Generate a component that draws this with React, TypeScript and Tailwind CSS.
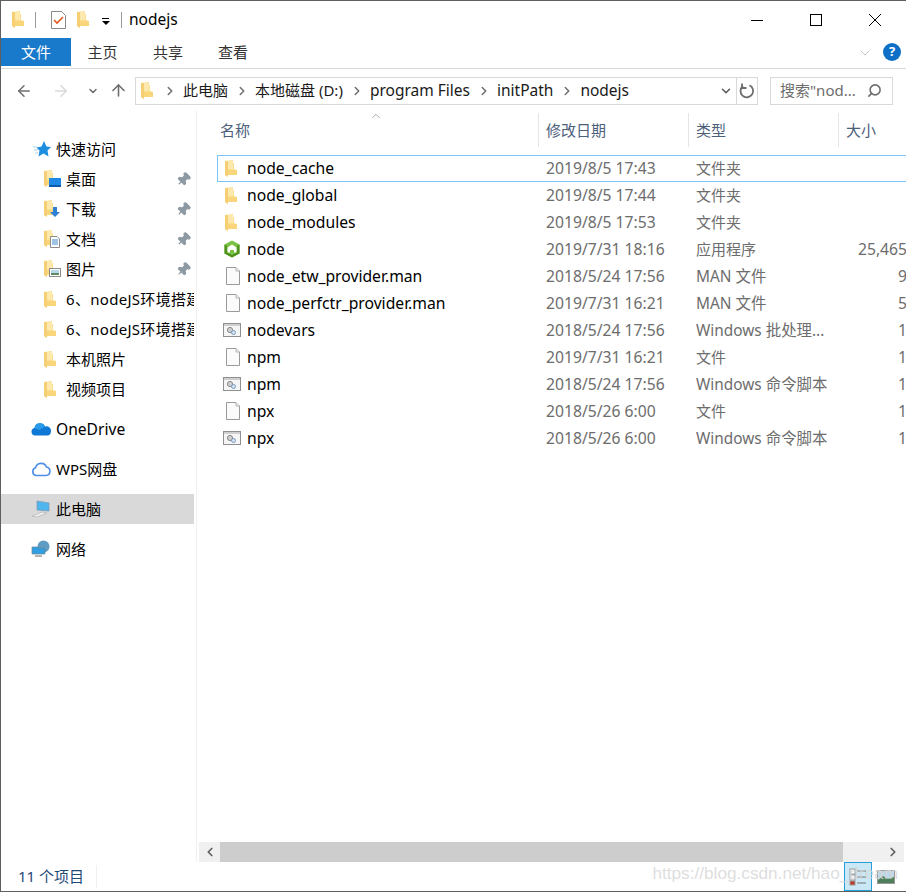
import React from "react";
import { ChevronDown, ChevronUp, ChevronRight, ChevronLeft, ArrowLeft, ArrowRight, ArrowUp, Search, Pin } from "lucide-react";

const FONT = "font-['Noto_Sans','Noto_Sans_CJK_SC',sans-serif]";

function Folder({ className = "" }: { className?: string }) {
  return (
    <svg viewBox="0 0 12 17" className={`w-[12px] h-[17px] shrink-0 ${className}`}>
      <path d="M0 1 L8 0 V3 H9 V9 L12 10 V15 H3 V17 L0 15 Z" fill="#fbdf8e" />
      <path d="M0 1 L3 1 V17 L0 15 Z" fill="#f6cf74" />
      <path d="M3 1 H8 V9 H3 Z" fill="#fde9ad" />
      <path d="M3 10 H12 V15 H3 Z" fill="#f9d67c" />
    </svg>
  );
}

function QuickFolder({ kind }: { kind: string }) {
  return (
    <div className="relative w-[17px] h-[18px] shrink-0">
      <Folder />
      <svg viewBox="0 0 12 12" className="absolute right-0 bottom-0 w-[12px] h-[12px]">
        {kind === "desk" && (
          <>
            <rect x="0" y="2" width="12" height="9" fill="#1e88e5" />
            <rect x="0" y="9" width="12" height="2" fill="#0d5aa7" />
          </>
        )}
        {kind === "down" && <path d="M4 1 H8 V6 H11 L6 11 L1 6 H4 Z" fill="#2f7fd4" />}
        {kind === "doc" && (
          <>
            <path d="M1.5 0.5 H8 L10.5 3 V11.5 H1.5 Z" fill="#fff" stroke="#8c8c8c" />
            <path d="M3 4 H9 M3 6 H9 M3 8 H9" stroke="#3c8ac9" />
          </>
        )}
        {kind === "pic" && (
          <>
            <rect x="0.5" y="2.5" width="11" height="8" fill="#fff" stroke="#8c8c8c" />
            <rect x="2" y="4" width="8" height="3" fill="#b7d7ea" />
            <rect x="2" y="7" width="8" height="2" fill="#5f8a5f" />
          </>
        )}
      </svg>
    </div>
  );
}

function FileIcon() {
  return (
    <svg viewBox="0 0 16 18" className="w-[16px] h-[18px] shrink-0">
      <path d="M1.5 0.5 H11 L14.5 4 V17.5 H1.5 Z" fill="#fbfbfb" stroke="#9a9a9a" />
      <path d="M11 0.5 V4 H14.5" fill="#eee" stroke="#b5b5b5" />
    </svg>
  );
}

function BatIcon() {
  return (
    <svg viewBox="0 0 18 14" className="w-[18px] h-[14px] shrink-0 -ml-[2px]">
      <rect x="0.5" y="0.5" width="17" height="13" fill="#f5f5f5" stroke="#8f8f8f" />
      <rect x="1" y="1" width="16" height="2" fill="#cfcfcf" />
      <circle cx="7" cy="7" r="2.6" fill="#d0d0d0" stroke="#8a8a8a" />
      <circle cx="10.5" cy="9.5" r="2" fill="#d4e3f2" stroke="#7b9bc0" />
    </svg>
  );
}

function NodeIcon() {
  return (
    <svg viewBox="0 0 16 18" className="w-[16px] h-[18px] shrink-0 -ml-[1px]">
      <path d="M8 0.5 L15.5 4.5 V13.5 L8 17.5 L0.5 13.5 V4.5 Z" fill="#7cc242" />
      <path d="M8 17.5 L15.5 13.5 V4.5 L13 6 V12 L8 15 L3 12 V6 L0.5 4.5 V13.5 Z" fill="#4e9320" />
      <path d="M8 4.5 L12.5 7.5 V12.5 H10 V10 H6 V12.5 H3.5 V7.5 Z" fill="#fff" />
    </svg>
  );
}

function CheckDoc() {
  return (
    <svg viewBox="0 0 15 18" className="w-[15px] h-[18px]">
      <path d="M0.5 0.5 H10.5 L14.5 4.5 V17.5 H0.5 Z" fill="#fff" stroke="#8a8a8a" />
      <path d="M3 9 L6 12 L12 6" fill="none" stroke="#e2571e" strokeWidth="1.6" />
    </svg>
  );
}

function NavRow({ icon, label, pin, active, indent, star, labelClass }: { icon: React.ReactNode; label: string; pin?: boolean; active?: boolean; indent?: boolean; star?: boolean; labelClass?: string }) {
  const pad = indent ? "pl-[43px]" : star ? "pl-[32px]" : "pl-[30px]";
  const iconBox = indent ? "w-[22px]" : star ? "w-[23px]" : "w-[25px]";
  return (
    <div className={`h-[30px] flex items-center text-[15px] text-black whitespace-nowrap overflow-hidden ${pad} ${active ? "bg-[#d9d9d9]" : ""}`}>
      <div className={`${iconBox} shrink-0 flex items-center`}>{icon}</div>
      <span className={`flex-1 overflow-hidden ${labelClass ?? ""}`}>{label}</span>
      {pin && <Pin className="w-[15px] h-[15px] mr-[3px] rotate-45 text-[#8d99a3] fill-[#8d99a3] shrink-0" />}
    </div>
  );
}

const rows = [
  { icon: <Folder />, name: "node_cache", date: "2019/8/5 17:43", type: "文件夹", size: "" },
  { icon: <Folder />, name: "node_global", date: "2019/8/5 17:44", type: "文件夹", size: "" },
  { icon: <Folder />, name: "node_modules", date: "2019/8/5 17:53", type: "文件夹", size: "" },
  { icon: <NodeIcon />, name: "node", date: "2019/7/31 18:16", type: "应用程序", size: "25,465 KB" },
  { icon: <FileIcon />, name: "node_etw_provider.man", date: "2018/5/24 17:56", type: "MAN 文件", size: "9 KB" },
  { icon: <FileIcon />, name: "node_perfctr_provider.man", date: "2019/7/31 16:21", type: "MAN 文件", size: "5 KB" },
  { icon: <BatIcon />, name: "nodevars", date: "2018/5/24 17:56", type: "Windows 批处理...", size: "1 KB" },
  { icon: <FileIcon />, name: "npm", date: "2019/7/31 16:21", type: "文件", size: "1 KB" },
  { icon: <BatIcon />, name: "npm", date: "2018/5/24 17:56", type: "Windows 命令脚本", size: "1 KB" },
  { icon: <FileIcon />, name: "npx", date: "2018/5/26 6:00", type: "文件", size: "1 KB" },
  { icon: <BatIcon />, name: "npx", date: "2018/5/26 6:00", type: "Windows 命令脚本", size: "1 KB" },
];

function Crumb({ text, latin }: { text: string; latin?: boolean }) {
  return (
    <>
      <ChevronRight className="w-[14px] h-[14px] text-[#6d6d6d] mx-[6px] shrink-0" strokeWidth={2.5} />
      <span className={`mr-[1px] ${latin ? "text-[15.5px]" : ""}`}>{text}</span>
    </>
  );
}

export default function App() {
  return (
    <div className={`relative w-[906px] h-[892px] bg-white flex flex-col overflow-hidden border-y border-l border-[#5f5f5f] ${FONT}`}>
      {/* title bar */}
      <div className="h-[37px] flex items-center shrink-0">
        <div className="pl-[11px] flex items-center">
          <Folder />
          <div className="w-px h-[16px] bg-[#9a9a9a] ml-[11px] mr-[15px]" />
          <CheckDoc />
          <Folder className="ml-[11px]" />
          <span className="ml-[13px] mt-[4px] w-[7px] flex flex-col items-center gap-[2px]">
            <span className="w-[7px] h-px bg-black" />
            <span className="w-0 h-0 border-x-[4px] border-x-transparent border-t-[4px] border-t-black" />
          </span>
          <div className="w-px h-[16px] bg-[#9a9a9a] ml-[12px] mr-[7px]" />
          <span className="text-[15.5px]">nodejs</span>
        </div>
        <div className="ml-auto flex items-center">
          <svg viewBox="0 0 12 12" className="w-[12px] h-[12px] mr-[47px]"><path d="M0 6.5 H12" stroke="#000" /></svg>
          <svg viewBox="0 0 12 12" className="w-[12px] h-[12px] mr-[47px]"><rect x="0.5" y="0.5" width="11" height="11" fill="none" stroke="#000" /></svg>
          <svg viewBox="0 0 12 12" className="w-[12px] h-[12px] mr-[25px]"><path d="M0 0 L12 12 M12 0 L0 12" stroke="#000" /></svg>
        </div>
      </div>

      {/* ribbon tabs */}
      <div className="h-[31px] flex items-start shrink-0 border-b border-[#d9d9d9] text-[15px] text-[#333]">
        <div className="w-[70px] h-[28px] bg-[#1979ca] text-white flex items-center justify-center">文件</div>
        <div className="w-[63px] h-[28px] flex items-center justify-center">主页</div>
        <div className="w-[68px] h-[28px] flex items-center justify-center">共享</div>
        <div className="w-[62px] h-[28px] flex items-center justify-center">查看</div>
        <div className="ml-auto flex items-center h-[28px] pr-[5px] gap-[10px]">
          <ChevronDown className="w-[16px] h-[16px] mt-[2px] text-[#b5b5b5]" strokeWidth={1.25} />
          <div className="w-[18px] h-[18px] rounded-full bg-[#0f6fc6] text-white text-[13px] font-bold flex items-center justify-center">?</div>
        </div>
      </div>

      {/* address row */}
      <div className="h-[42px] flex items-center shrink-0 pt-[1px]">
        <ArrowLeft className="w-[18px] h-[18px] ml-[14px] text-[#6d6d6d]" />
        <ArrowRight className="w-[18px] h-[18px] ml-[19px] text-[#d9d9d9]" />
        <ChevronDown className="w-[12px] h-[12px] ml-[17px] text-[#6d6d6d]" strokeWidth={3} />
        <ArrowUp className="w-[19px] h-[19px] ml-[10px] text-[#6d6d6d]" />
        <div className="ml-[7px] w-[623px] h-[28px] border border-[#d9d9d9] flex items-center text-[15px] text-[#1a1a1a]">
          <div className="flex-1 flex items-center pl-[5px] whitespace-nowrap">
            <Folder />
            <span className="w-[4px]" />
            <Crumb text="此电脑" />
            <Crumb text="本地磁盘 (D:)" />
            <Crumb text="program Files" latin />
            <Crumb text="initPath" latin />
            <Crumb text="nodejs" latin />
          </div>
          <ChevronDown className="w-[14px] h-[14px] text-[#555] mr-[3px]" strokeWidth={2.5} />
          <div className="w-[21px] h-full border-l border-[#d9d9d9] flex items-center justify-center">
            <svg viewBox="0 0 16 16" className="w-[16px] h-[16px]">
              <path d="M4 3 A6.3 6.3 0 1 0 10.5 2.3" fill="none" stroke="#6d6d6d" strokeWidth="1.8" />
              <path d="M3 0.5 V5 H7.5" fill="none" stroke="#6d6d6d" strokeWidth="1.8" />
            </svg>
          </div>
        </div>
        <div className="ml-[12px] w-[123px] h-[28px] border border-[#d9d9d9] flex items-center pl-[9px] text-[15px] text-[#6d6d6d]">
          <span className="flex-1 whitespace-nowrap">搜索"nod...</span>
          <Search className="w-[15px] h-[15px] mr-[10px] -scale-x-100 text-[#6d6d6d]" strokeWidth={2.5} />
        </div>
      </div>

      {/* body */}
      <div className="flex-1 flex min-h-0">
        {/* nav pane */}
        <div className="w-[193px] shrink-0 pt-[23px]">
          <NavRow star icon={<svg viewBox="0 0 18 16" className="w-[18px] h-[16px]"><path d="M11 0 L13.5 5.5 L18 6 L14.5 9.5 L15.5 15.5 L10.5 12.5 L5.5 15.5 L6.5 9.5 L3.5 6.5 L8.5 5.5 Z" fill="#1e8fe0" /><path d="M0 6 H4 M1 9 H5 M2 12 H5" stroke="#a8d4f2" /></svg>} label="快速访问" />
          <NavRow indent icon={<QuickFolder kind="desk" />} label="桌面" pin />
          <NavRow indent icon={<QuickFolder kind="down" />} label="下载" pin />
          <NavRow indent icon={<QuickFolder kind="doc" />} label="文档" pin />
          <NavRow indent icon={<QuickFolder kind="pic" />} label="图片" pin />
          <NavRow indent labelClass="tracking-[0.3px]" icon={<Folder />} label="6、nodeJS环境搭建" />
          <NavRow indent labelClass="tracking-[0.3px]" icon={<Folder />} label="6、nodeJS环境搭建" />
          <NavRow indent icon={<Folder />} label="本机照片" />
          <NavRow indent icon={<Folder />} label="视频项目" />
          <div className="h-[10px]" />
          <NavRow labelClass="text-[15.6px] mt-[1px]" icon={<svg viewBox="0 0 20 14" className="w-[20px] h-[14px]"><path d="M4 13.5 A3.8 3.8 0 0 1 3.5 6 A5.5 5.5 0 0 1 14 4.5 A4.5 4.5 0 0 1 19.8 10 A3.5 3.5 0 0 1 17 13.5 Z" fill="#0f78d4" /><path d="M3.5 6 A5.5 5.5 0 0 1 14 4.5 L8 8 Z" fill="#2a9be8" /></svg>} label="OneDrive" />
          <div className="h-[10px]" />
          <NavRow icon={<svg viewBox="0 0 20 16" className="w-[20px] h-[16px]"><path d="M5 14.5 A4 4 0 0 1 4.5 6.8 A5.8 5.8 0 0 1 15.5 6 A4.3 4.3 0 0 1 15 14.5 Z" fill="none" stroke="#4d8fe8" strokeWidth="1.6" /></svg>} label="WPS网盘" />
          <div className="h-[10px]" />
          <NavRow active icon={<svg viewBox="0 0 20 18" className="w-[20px] h-[18px]"><path d="M6 1 L18 3 V11 L6 10 Z" fill="#4fb5ee" stroke="#7d9db5" strokeWidth="0.8" /><path d="M1 16 L11 12 L16 13 L6 17 Z" fill="#eee" stroke="#b4b4b4" strokeWidth="0.7" /></svg>} label="此电脑" />
          <div className="h-[10px]" />
          <NavRow icon={<svg viewBox="0 0 20 18" className="w-[20px] h-[18px]"><circle cx="12.5" cy="6.5" r="6" fill="#5f9cc4" /><path d="M8 8 H14 V14 H1 V7 H8 Z" fill="#2f9fe2" stroke="#6f8796" strokeWidth="0.7" /><path d="M4 16 H11" stroke="#9a9a9a" strokeWidth="1.5" /></svg>} label="网络" />
        </div>

        {/* file list */}
        <div className="flex-1 min-w-0 flex flex-col border-l border-[#f0f0f0] ml-[2px]">
          <div className="relative h-[36px] flex items-stretch shrink-0 text-[15px] text-[#4c607a] pt-[2px]">
            <ChevronUp className="absolute left-[172px] -top-[2px] w-[14px] h-[14px] text-[#8d8d8d]" strokeWidth={1.25} />
            <div className="w-[342px] pl-[23px] border-r border-[#e5e5e5] flex items-center">名称</div>
            <div className="w-[150px] pl-[7px] border-r border-[#e5e5e5] flex items-center">修改日期</div>
            <div className="w-[150px] pl-[7px] border-r border-[#e5e5e5] flex items-center">类型</div>
            <div className="pl-[7px] flex items-center">大小</div>
          </div>
          <div className="flex-1 pt-[8px] pl-[20px] overflow-hidden">
            {rows.map((r, i) => (
              <div key={i} className={`h-[27px] w-[700px] flex items-center text-[15.7px] whitespace-nowrap border ${i === 0 ? "border-[#7cc4f8]" : "border-transparent"}`}>
                <div className="w-[328px] flex items-center shrink-0">
                  <div className="w-[29px] pl-[7px] flex items-center shrink-0">{r.icon}</div>
                  <span className="text-black">{r.name}</span>
                </div>
                <div className="w-[150px] shrink-0 text-[#6d6d6d]">{r.date}</div>
                <div className={`w-[150px] shrink-0 text-[#6d6d6d] ${/[A-Z]/.test(r.type) ? "text-[15.4px]" : "text-[15px]"}`}>{r.type}</div>
                <div className="w-[85px] shrink-0 text-right text-[#6d6d6d]">{r.size}</div>
              </div>
            ))}
          </div>
          {/* horizontal scrollbar */}
          <div className="h-[20px] ml-[2px] mr-[2px] bg-[#f0f0f0] flex items-center shrink-0">
            <div className="w-[21px] flex justify-center"><ChevronLeft className="w-[14px] h-[14px] text-[#606060]" strokeWidth={3} /></div>
            <div className="flex-1 h-full bg-[#cdcdcd]" />
            <div className="w-[61px] flex justify-end pr-[4px]"><ChevronRight className="w-[14px] h-[14px] text-[#606060]" strokeWidth={3} /></div>
          </div>
        </div>
      </div>

      {/* status bar */}
      <div className="h-[29px] flex items-center shrink-0 text-[15px] text-[#1f4a78]">
        <span className="pl-[17px] w-[96px] border-r border-[#f0f0f0] whitespace-nowrap">11 个项目</span>
        <div className="ml-auto flex items-center h-full mr-[6px]">
          <div className="w-[28px] h-full border border-[#26a0da] bg-[#cbe8f6] flex items-center justify-center">
            <svg viewBox="0 0 18 18" className="w-[18px] h-[18px]"><rect x="1" y="1" width="5" height="5" fill="#fff" stroke="#999" /><rect x="1" y="7" width="5" height="5" fill="#fff" stroke="#999" /><rect x="1" y="13" width="5" height="4" fill="#c0392b" stroke="#999" /><path d="M8 3 H17 M8 9 H17 M8 15 H17" stroke="#777" /></svg>
          </div>
          <div className="w-[28px] h-full flex items-center justify-center">
            <svg viewBox="0 0 18 14" className="w-[18px] h-[14px]"><rect x="0.5" y="0.5" width="17" height="13" fill="#bcd8e8" stroke="#999" /><path d="M1 10 L6 6 L11 9 L17 7 V13 H1 Z" fill="#4f7f5a" /></svg>
          </div>
        </div>
      </div>

      {/* watermark */}
      <span className="absolute right-[8px] bottom-[4px] text-[17.2px] text-[#d5d5d5]/80 font-['Liberation_Sans',sans-serif] whitespace-nowrap">https://blog.csdn.net/hao_dream</span>
    </div>
  );
}
